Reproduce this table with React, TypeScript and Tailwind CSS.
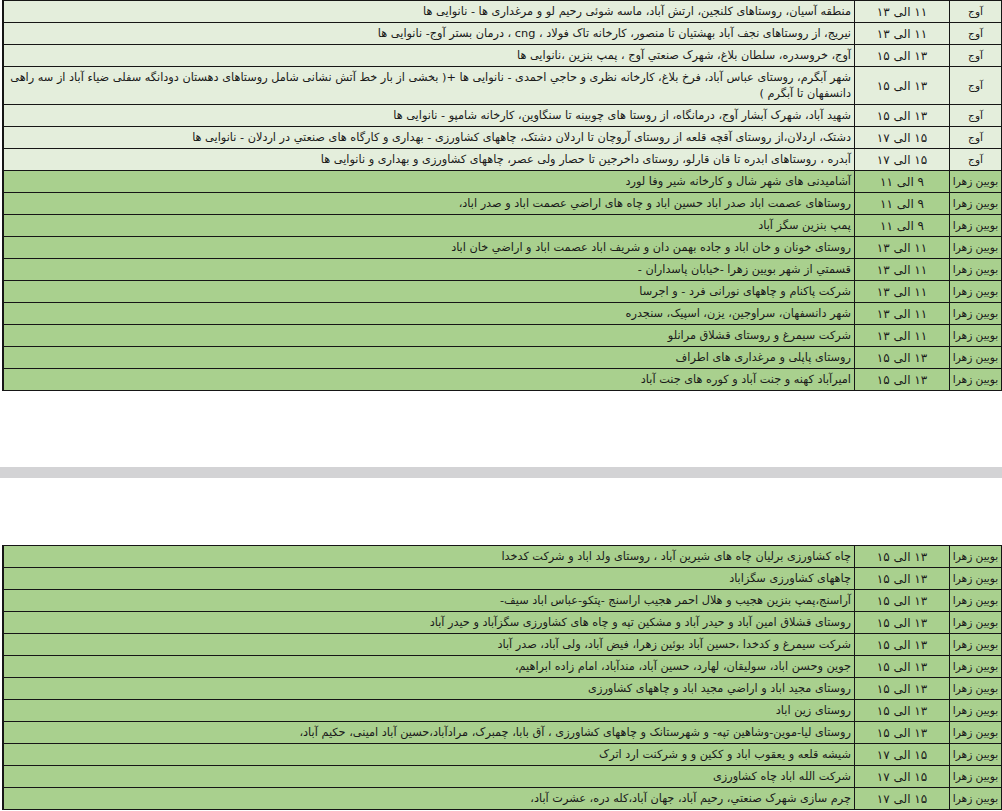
import React from "react";

type Row = { name: string; time: string; text: React.ReactNode; tall?: boolean; light?: boolean };

const t1: Row[] = [
  { name: "آوج", time: "۱۱ الی ۱۳", light: true, text: "منطقه آسیان، روستاهای کلنجین، ارتش آباد، ماسه شوئی رحیم لو و مرغداری ها  - نانوایی ها" },
  { name: "آوج", time: "۱۱ الی ۱۳", light: true, text: "نیریج، از روستاهای نجف آباد بهشتیان تا منصور، کارخانه تاک فولاد ، cng ،  درمان بستر آوج- نانوایی ها" },
  { name: "آوج", time: "۱۳ الی ۱۵", light: true, text: "آوج، خروسدره، سلطان بلاغ، شهرک صنعتي آوج ، پمپ بنزین ،نانوایی ها" },
  {
    name: "آوج",
    time: "۱۳ الی ۱۵",
    light: true,
    tall: true,
    text: (
      <>
        شهر آبگرم، روستای عباس آباد، فرخ بلاغ، کارخانه نظری و حاجي احمدی - نانوایی ها +( بخشی از بار خط آتش نشانی شامل روستاهای دهستان دودانگه سفلی ضیاء آباد از سه راهی
        <br />
        دانسفهان تا آبگرم )
      </>
    ),
  },
  { name: "آوج", time: "۱۳ الی ۱۵", light: true, text: "شهید آباد، شهرک آبشار آوج،  درمانگاه، از روستا های چوبینه تا سنگاوین، کارخانه شامپو - نانوایی ها" },
  { name: "آوج", time: "۱۵ الی ۱۷", light: true, text: "دشتک، اردلان،از روستای آقچه قلعه از روستای آروچان تا اردلان دشتک، چاههای کشاورزی - بهداری و کارگاه های صنعتي در اردلان  - نانوایی ها" },
  { name: "آوج", time: "۱۵ الی ۱۷", light: true, text: "آبدره ، روستاهای ابدره تا قان قارلو، روستای داخرجین تا حصار ولی عصر، چاههای کشاورزی و بهداری و  نانوایی ها" },
  { name: "بویین زهرا", time: "۹ الی ۱۱", text: "آشامیدنی های شهر شال و کارخانه شیر وفا لورد" },
  { name: "بویین زهرا", time: "۹ الی ۱۱", text: "روستاهای عصمت اباد صدر اباد حسین اباد و چاه های اراضي عصمت اباد و صدر اباد،" },
  { name: "بویین زهرا", time: "۹ الی ۱۱", text: "پمپ بنزین سگز آباد" },
  { name: "بویین زهرا", time: "۱۱ الی ۱۳", text: "روستای خونان و خان اباد و جاده بهمن دان و شریف اباد عصمت اباد و اراضي خان اباد" },
  { name: "بویین زهرا", time: "۱۱ الی ۱۳", text: "قسمتي از شهر بویین زهرا -خیابان پاسداران -" },
  { name: "بویین زهرا", time: "۱۱ الی ۱۳", text: "شرکت پاکنام  و چاههای نورانی فرد - و اجرسا" },
  { name: "بویین زهرا", time: "۱۱ الی ۱۳", text: "شهر دانسفهان، سراوجین، یزن، اسپیک، سنجدره" },
  { name: "بویین زهرا", time: "۱۱ الی ۱۳", text: "شرکت سیمرغ و روستای قشلاق مرانلو" },
  { name: "بویین زهرا", time: "۱۳ الی ۱۵", text: "روستای پاپلی و مرغداری های اطراف" },
  { name: "بویین زهرا", time: "۱۳ الی ۱۵", text: "امیرآباد کهنه و جنت آباد و کوره های جنت آباد" },
];

const t2: Row[] = [
  { name: "بویین زهرا", time: "۱۳ الی ۱۵", text: "چاه کشاورزی برلیان چاه های شیرین آباد ،  روستای ولد اباد و شرکت کدخدا" },
  { name: "بویین زهرا", time: "۱۳ الی ۱۵", text: "چاههای کشاورزی سگزاباد" },
  { name: "بویین زهرا", time: "۱۳ الی ۱۵", text: "آراسنج،پمپ بنزین هجیب و هلال احمر هجیب اراسنج -پتکو-عباس اباد سیف-" },
  { name: "بویین زهرا", time: "۱۳ الی ۱۵", text: "روستای قشلاق امین آباد و حیدر آباد و مشکین تپه و چاه های کشاورزی سگزآباد و حیدر آباد" },
  { name: "بویین زهرا", time: "۱۳ الی ۱۵", text: "شرکت سیمرغ و کدخدا ،حسین آباد بوئین زهرا، فیض آباد، ولی آباد، صدر آباد" },
  { name: "بویین زهرا", time: "۱۳ الی ۱۵", text: "جوین وحسن اباد، سولیقان، لهارد، حسین آباد، مندآباد، امام زاده ابراهیم،" },
  { name: "بویین زهرا", time: "۱۳ الی ۱۵", text: "روستای مجید اباد و اراضي مجید اباد و چاههای کشاورزی" },
  { name: "بویین زهرا", time: "۱۳ الی ۱۵", text: "روستای زین اباد" },
  { name: "بویین زهرا", time: "۱۳ الی ۱۵", text: "روستای لیا-موین-وشاهین تپه- و شهرستانک و چاههای کشاورزی ، آق بابا، چمبرک، مرادآباد،حسین آباد امینی، حکیم آباد،" },
  { name: "بویین زهرا", time: "۱۵ الی ۱۷", text: "شیشه قلعه و یعقوب اباد و ککین و و شرکنت ارد اترک" },
  { name: "بویین زهرا", time: "۱۵ الی ۱۷", text: "شرکت الله اباد چاه کشاورزی" },
  { name: "بویین زهرا", time: "۱۵ الی ۱۷", text: "چرم سازی شهرک صنعتي، رحیم آباد، جهان آباد،کله دره، عشرت آباد،" },
];

function Table({ rows }: { rows: Row[] }) {
  return (
    <div dir="rtl" className="ml-[2px] border-l-2 border-r border-t border-[#161616] w-[1000px]">
      {rows.map((r, i) => (
        <div
          key={i}
          className={`flex border-b border-[#161616] ${r.tall ? "h-[38px]" : "h-[22px]"} ${
            r.light ? "bg-[#e4eedc]" : "bg-[#a9d08e]"
          }`}
        >
          <div className="w-[52px] shrink-0 flex items-center justify-center whitespace-nowrap border-l border-[#161616] text-[10.6px] tracking-[-0.2px]">
            {r.name}
          </div>
          <div className="w-[95px] shrink-0 flex items-center justify-center whitespace-nowrap border-l border-[#161616] text-[12px]">
            {r.time}
          </div>
          <div className="flex-1 min-w-0 flex items-center pr-[3px] whitespace-nowrap leading-[16px] overflow-hidden">
            <div>{r.text}</div>
          </div>
        </div>
      ))}
    </div>
  );
}

export default function App() {
  return (
    <div className="w-[1002px] bg-white text-[#1a1a1a] text-[11.3px]" style={{ fontFamily: "'DejaVu Sans', sans-serif" }}>
      <Table rows={t1} />
      <div className="h-[76px]" />
      <div className="h-[11px] bg-[#d3d3d5]" />
      <div className="h-[67px]" />
      <Table rows={t2} />
    </div>
  );
}
